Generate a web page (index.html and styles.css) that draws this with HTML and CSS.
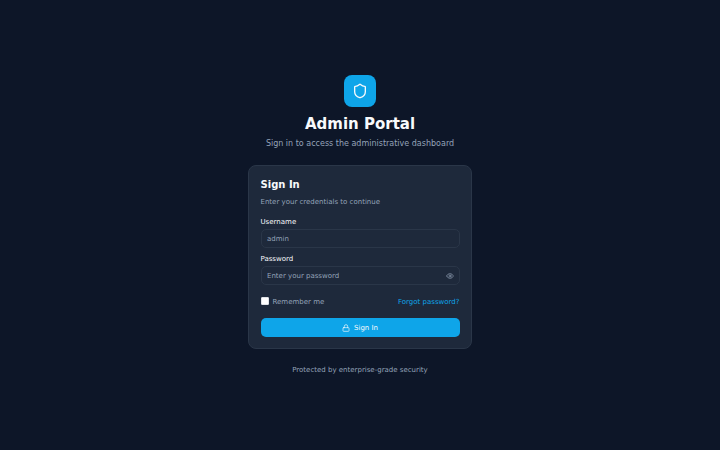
FILE: index.html
```html
<!DOCTYPE html>
<html lang="en">
<head>
<meta charset="utf-8">
<title>Admin Portal</title>
<link rel="stylesheet" href="styles.css">
</head>
<body>
<main class="login">
  <header class="brand">
    <div class="logo">
      <svg viewBox="0 0 24 24" width="16" height="16"><path d="M20 13c0 5-3.500 7.500-7.660 8.950a1 1 0 0 1-.670-.010C7.500 20.500 4 18 4 13V6a1 1 0 0 1 1-1c2 0 4.500-1.200 6.240-2.720a1.170 1.170 0 0 1 1.520 0C14.510 3.810 17 5 19 5a1 1 0 0 1 1 1z"/></svg>
    </div>
    <h1>Admin Portal</h1>
    <p>Sign in to access the administrative dashboard</p>
  </header>
  <section class="card">
    <h2>Sign In</h2>
    <p class="hint">Enter your credentials to continue</p>
    <form>
      <label class="label" for="user">Username</label>
      <div class="field"><input id="user" type="text" placeholder="admin"></div>
      <label class="label" for="pass">Password</label>
      <div class="field">
        <input id="pass" type="password" placeholder="Enter your password">
        <svg class="eye" viewBox="0 0 24 24" width="8" height="8"><path d="M2.060 12.350a1 1 0 0 1 0-.700 10.750 10.750 0 0 1 19.880 0 1 1 0 0 1 0 .700 10.750 10.750 0 0 1-19.880 0"/><circle cx="12" cy="12" r="3"/></svg>
      </div>
      <div class="options">
        <label class="remember"><input type="checkbox"><span>Remember me</span></label>
        <a href="#">Forgot password?</a>
      </div>
      <button type="button">
        <svg viewBox="0 0 24 24" width="8" height="8"><rect x="3" y="11" width="18" height="11" rx="2"/><path d="M7 11V7a5 5 0 0 1 10 0v4"/></svg>
        <span>Sign In</span>
      </button>
    </form>
  </section>
  <footer>Protected by enterprise-grade security</footer>
</main>
</body>
</html>
```
FILE: styles.css
```css
* { box-sizing: border-box; }
body {
  margin: 0;
  min-height: 450px;
  display: flex;
  justify-content: center;
  align-items: center;
  background: #0d1628;
  color: #f8fafc;
  font-family: "DejaVu Sans", sans-serif;
  font-size: 7px;
  line-height: 10px;
}
h1, h2, p { margin: 0; }
svg { fill: none; stroke: currentColor; stroke-width: 2; stroke-linecap: round; stroke-linejoin: round; }
.login { width: 224px; }
.brand { display: flex; flex-direction: column; align-items: center; margin-bottom: 15px; }
.logo {
  display: flex;
  align-items: center;
  justify-content: center;
  width: 32px;
  height: 32px;
  margin-bottom: 8px;
  border-radius: 8px;
  background: #0ea5e9;
}
.brand h1 { font-size: 15px; line-height: 18px; }
.brand p { margin-top: 5px; font-size: 8px; line-height: 12px; color: #94a3b8; }
.card {
  height: 184px;
  padding: 12px 11.5px 0;
  border: 1px solid #2a3648;
  border-radius: 8px;
  background: #1e293b;
}
.card h2 { font-size: 10px; line-height: 14px; }
.hint { margin-top: 5px; color: #94a3b8; }
.label { display: block; margin-top: 10px; font-weight: 400; }
.field {
  display: flex;
  align-items: center;
  height: 19px;
  margin-top: 2px;
  padding: 0 4.5px 0 5.5px;
  border: 1px solid #2a3648;
  border-radius: 5px;
}
.field + .label { margin-top: 6px; }
.field input {
  flex: 1;
  min-width: 0;
  height: 10px;
  padding: 0;
  border: 0;
  outline: 0;
  background: none;
  color: inherit;
  font: inherit;
}
.field input::placeholder { color: #94a3b8; }
.eye { color: #94a3b8; }
.options { display: flex; align-items: center; justify-content: space-between; margin-top: 11px; height: 12px; line-height: 12px; }
.remember { display: flex; align-items: center; gap: 4px; color: #94a3b8; }
.remember input {
  appearance: none;
  width: 8px;
  height: 8px;
  margin: 0 0 2px;
  border: 1px solid #dfe2e7;
  border-radius: 1px;
  background: #fff;
}
.options a { color: #0ea5e9; text-decoration: none; }
button {
  display: flex;
  align-items: center;
  justify-content: center;
  gap: 4px;
  width: 100%;
  height: 19px;
  margin-top: 10px;
  padding: 0;
  border: 0;
  border-radius: 5px;
  background: #0ea5e9;
  color: #f8fafc;
  font: inherit;
}
footer { margin-top: 16px; text-align: center; color: #94a3b8; }
```
